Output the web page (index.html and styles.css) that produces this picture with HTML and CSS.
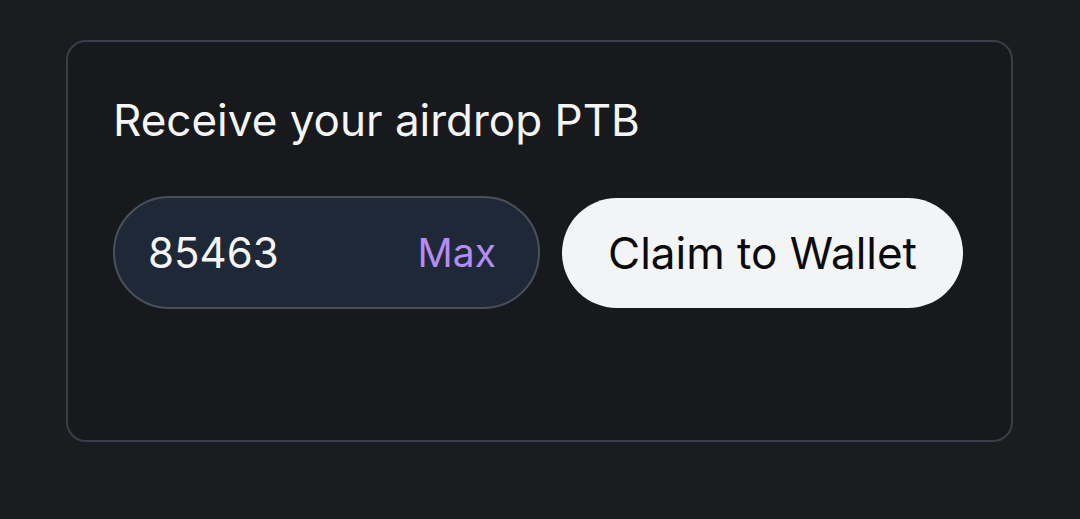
FILE: index.html
```html
<!DOCTYPE html>
<html lang="en">
<head>
    <meta charset="UTF-8">
    <meta name="viewport" content="width=device-width, initial-scale=1.0">
    <title>Airdrop Claim</title>
    <link rel="stylesheet" href="styles.css">
</head>
<body>
    <div class="card">
        <h2 class="card-title">Receive your airdrop PTB</h2>
        <div class="claim-row">
            <div class="amount-field">
                <input type="text" class="amount-input" value="85463">
                <button type="button" class="max-btn">Max</button>
            </div>
            <button type="button" class="claim-btn">Claim to Wallet</button>
        </div>
    </div>
</body>
</html>
```

FILE: styles.css
```css
body {
    margin: 0;
    padding: 40px 66px;
    background-color: #1b1c20;
    font-family: Inter, "Noto Sans", Arial, sans-serif;
    color: #f3f4f6;
}
.card {
    box-sizing: border-box;
    width: 947px;
    height: 402px;
    padding: 50px 45px;
    border: 2px solid #3a3e46;
    border-radius: 20px;
    background-color: #18191d;
}
.card-title {
    margin: 0 0 48px 0;
    font-size: 44px;
    font-weight: 400;
    line-height: 56px;
    color: #f5f5f6;
}
.claim-row {
    display: flex;
    align-items: center;
    gap: 22px;
}
.amount-field {
    box-sizing: border-box;
    display: flex;
    align-items: center;
    width: 427px;
    height: 113px;
    padding: 0 42px 0 33px;
    border: 2px solid #4a505a;
    border-radius: 57px;
    background-color: #1f2836;
}
.amount-input {
    flex: 1;
    min-width: 0;
    border: none;
    outline: none;
    background: transparent;
    font-family: inherit;
    font-size: 42px;
    color: #f5f5f6;
    padding: 0;
}
.max-btn {
    border: none;
    background: transparent;
    padding: 0;
    font-family: inherit;
    font-size: 39px;
    color: #b48cf2;
    cursor: pointer;
}
.claim-btn {
    box-sizing: border-box;
    width: 401px;
    height: 110px;
    border: none;
    border-radius: 55px;
    background-color: #f3f4f6;
    font-family: inherit;
    font-size: 44px;
    color: #0b0b0d;
    cursor: pointer;
}
```
